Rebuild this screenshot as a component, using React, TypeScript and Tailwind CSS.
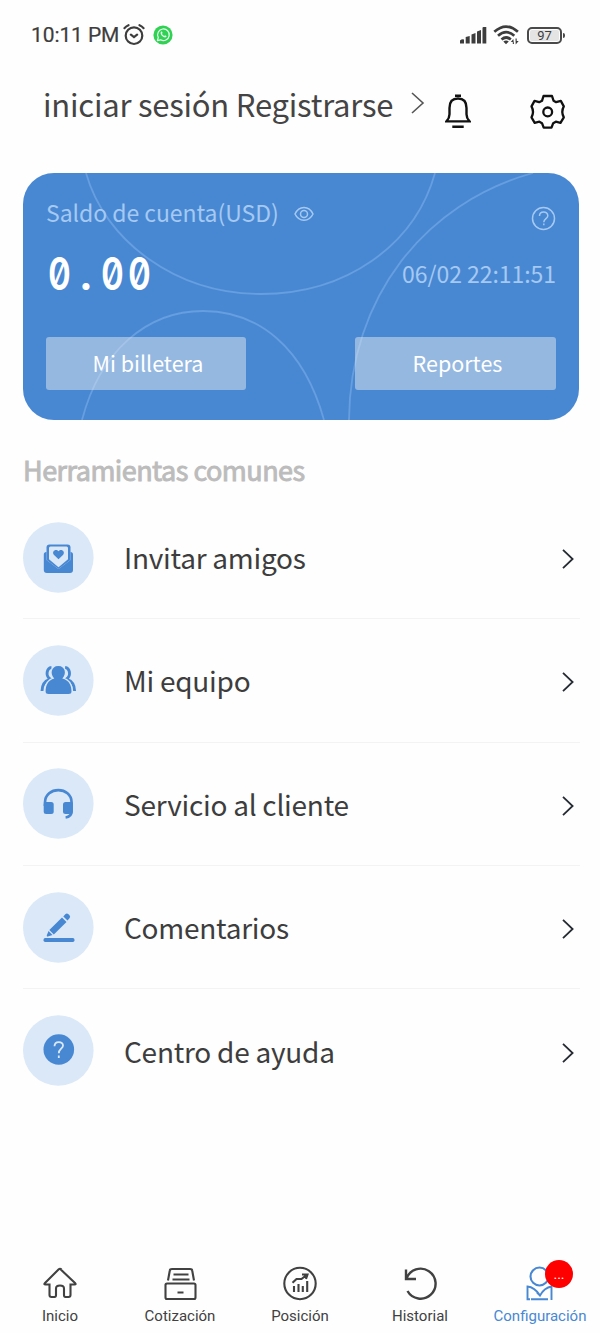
import type { ReactNode } from "react";

const han = "font-['Noto_Sans_CJK_SC',sans-serif]";

function StatusBar() {
  return (
    <div className="flex h-[70px] items-center pl-[31px] pr-[38px] text-[#3d3d3d]">
      <span className="w-[90px] whitespace-nowrap font-[Roboto,sans-serif] text-[21px] leading-6 tracking-[-0.100px] [-webkit-text-stroke:0.200px]">10:11 PM</span>
      <svg className="ml-[2px]" width="23" height="24" viewBox="0 0 23 24" fill="none" stroke="currentColor" strokeWidth="2.200" strokeLinecap="round">
        <circle cx="11" cy="12.700" r="8.300" />
        <path d="M7.900 11.600 11 14l3.100-2.400M1.500 5.200Q3 3.200 5.500 2.200M20.500 5.200Q19 3.200 16.500 2.200" />
      </svg>
      <svg className="ml-[7px]" width="20" height="20" viewBox="0 0 20 20" fill="none">
        <circle cx="10" cy="10" r="9.6" fill="#31d254" />
        <path d="M4.4 15.6 5.3 12.4A5.8 5.8 0 1 1 7.6 14.8Z" stroke="#e9fff0" strokeWidth="1.2" strokeLinejoin="round" />
        <path d="M7.7 7.2c-.7 2.4 2.8 5.8 5 5.1.8-.3.9-1 .7-1.4l-1.4-.7-.7.7c-1.1-.4-1.9-1.2-2.3-2.2l.6-.7-.6-1.4c-.5-.2-1.1 0-1.3.6Z" fill="#e9fff0" />
      </svg>
      <div className="ml-auto flex items-center">
        <svg width="27" height="18" viewBox="0 0 27 18" fill="currentColor">
          <path d="M0 17.500v-3q2-1.800 4-1v4zM5.700 17.500v-6.500l4-1v7.500zM11.500 17.500V8.500l4-1.500v10.500zM17 17.500V5.500l4-1.500v13.500zM22.500 17.500V2q0-.8 1-1h2.800v16.500z" />
        </svg>
        <svg className="ml-[6px]" width="27" height="20" viewBox="0 0 27 20" fill="none" stroke="currentColor" strokeWidth="2.700">
          <path d="M1.300 6.800q11.700-10.500 23.600 0M5 10.800q8.200-7.200 16.300 0M8.500 14.500q4.700-4 9.300 0" />
          <path d="M10.300 16.500q2.800-1.800 5.500 0L13 19.200Z" fill="currentColor" stroke="none" />
          <path d="m20.300 14-2.500 3h2v2h1.200zM22.700 19.500l3-3.500h-2v-2.500h-1.200z" fill="currentColor" stroke="none" />
        </svg>
        <div className="relative ml-[7px] flex h-[17px] w-[35px] items-center justify-center rounded-[5px] border-2 border-[#4a4a4a] p-[1px]">
          <span className="flex h-full w-full items-center justify-center rounded-[2px] bg-[#e4e4e4] font-[Roboto,sans-serif] text-[13px] font-normal leading-none">97</span>
          <span className="absolute -right-[5px] top-1 h-[5px] w-[2px] rounded-r bg-[#4a4a4a]" />
        </div>
      </div>
    </div>
  );
}

function Header() {
  return (
    <div className="flex h-[70px] items-center pl-[43px] text-[#444]">
      <span className="-mt-[3px] w-[351px] whitespace-nowrap text-[31px] leading-[44px] tracking-[-0.220px]">iniciar sesión Registrarse</span>
      <svg className="ml-[17px] -mt-1" width="14" height="22" viewBox="0 0 14 22" fill="none" stroke="#555" strokeWidth="1.6">
        <path d="M1 1 12 11 1 21" />
      </svg>
      <svg className="ml-5 mt-3" width="26" height="35" viewBox="0 0 26 35" fill="none" stroke="#111" strokeWidth="2.400">
        <path d="M10 1.700h6M7.300 32.800h11.400" />
        <path d="M1.500 27.400c2.500-2.800 3-4.400 3-7.200V14c0-6.800 3.300-9.500 8.500-9.500s8.500 2.700 8.500 9.500v6.200c0 2.800.5 4.400 3 7.200Z" />
      </svg>
      <svg className="ml-[59px] mt-[13px]" width="36" height="36" viewBox="0 0 36 36" fill="none" stroke="#111" strokeWidth="2.300" strokeLinejoin="round">
        <path d="M13.500 2h8.500l1.600 4.800 2.500 1.400 4.700-1.300 3 5.500q-3 5.500 0 11l-3.300 5.500-4.700-1.200-2.600 1.500-1.700 4.500h-7.800l-1.700-4.500-2.600-1.500-4.700 1.200-3.200-5.500q3-5.500 0-11l3-5.500 4.700 1.300L12 6.800Z" />
        <circle cx="17.700" cy="17.900" r="4.400" />
      </svg>
    </div>
  );
}

function Card() {
  return (
    <section className="relative ml-[23px] mt-[33px] h-[247px] w-[556px] overflow-hidden rounded-[31px] bg-[#4888d3]">
      <svg className="absolute inset-0" width="556" height="247" fill="none" stroke="#73a8e4" strokeWidth="1.800" strokeOpacity=".7">
        <path d="M63 0C82 68 153 121 238 121S392 72 412 0" />
        <path d="M59 247C77 178 124 138 180 138S281 175 301 247" />
        <path d="M326 247C327 124 402 30 510 0" />
      </svg>
      <div className="relative flex h-full flex-col pl-[23px] pr-[23px]">
        <div className="flex h-20 items-center text-[#a5c9f1]">
          <span className="-mt-[3px] w-[232px] whitespace-nowrap text-[23px] leading-8 tracking-[-0.050px]">Saldo de cuenta(USD)</span>
          <svg className="ml-4 mt-px" width="20" height="16" viewBox="0 0 20 16" fill="none" stroke="currentColor" strokeWidth="1.500">
            <path d="M1 8C5-.7 15-.7 19 8 15 16.300 5 16.300 1 8Z" />
            <circle cx="10" cy="8" r="3.500" />
          </svg>
          <svg className="ml-auto mt-[10px]" width="25" height="25" viewBox="0 0 25 25" fill="none" stroke="currentColor" strokeWidth="1.500">
            <circle cx="12.500" cy="12.500" r="11" />
            <path d="M8.500 10c0-5.200 8.300-5.200 8.300-.3 0 3-4 3-4 6.600M12.800 17.500v1.800" />
          </svg>
        </div>
        <div className="flex h-11 items-center justify-between">
          <span className="-mt-1 flex font-[Inter,sans-serif] text-[45px] font-semibold leading-none text-white [font-feature-settings:'zero'_1]">
            {"0.00".split("").map((c, i) => (
              <span key={i} className={c === "." ? "flex w-[26.700px] justify-center" : "flex w-[26.700px] scale-x-[0.770] justify-center"}>{c}</span>
            ))}
          </span>
          <span className="-mt-1 whitespace-nowrap text-[23px] leading-8 tracking-[-0.050px] text-[#a5c9f1]">06/02 22:11:51</span>
        </div>
        <div className="mt-10 flex justify-between text-[21.500px] text-white">
          <button className="h-[53px] w-[200px] rounded-[3px] bg-[#e2e8f0]/50 pl-1">Mi billetera</button>
          <button className="h-[53px] w-[201px] rounded-[3px] bg-[#e2e8f0]/50 pl-1">Reportes</button>
        </div>
      </div>
    </section>
  );
}

const inviteIcon = (
  <>
    <path d="M20.800 32.500q0-2.500 2.500-2.500h24.200q2.500 0 2.500 2.500V48q0 3-3 3H23.800q-3 0-3-3Z" fill="currentColor" />
    <path d="M23.500 38V25q0-3 3-3h18q3 0 3 3v13l-12 9Z" fill="#dae8f8" />
    <path d="M23.500 38V25.500q0-3 3-3h18q3 0 3 3V38l-12 9Z" fill="currentColor" />
    <path d="M26 26q0-1.500 1.500-1.500h16Q45 24.500 45 26v11.200l-9.500 8-9.500-8Z" fill="#dae8f8" />
    <path d="m35.500 37.300-4.700-4.500c-2.500-3.500 2.300-6.500 4.700-3.500 2.400-3 7.200 0 4.700 3.500Z" fill="currentColor" />
  </>
);
const teamIcon = (
  <>
    <path d="M28.500 22.500c-4.500.5-6.500 8-1.500 11.500-5.500 2-8 6-8 12M42.100 22.500c4.500.5 6.500 8 1.500 11.500 5.500 2 8 6 8 12" fill="none" stroke="currentColor" strokeWidth="2.900" />
    <path d="M35.300 21c7.500 0 8.300 8.500 4 12.500 7 1.500 9.200 7.500 9.200 13q0 2.500-3 2.500H25.600q-3 0-3-2.500c0-5.500 2.200-11.500 8.700-13C27 29.500 27.800 21 35.300 21Z" fill="currentColor" stroke="#dae8f8" strokeWidth="2.400" paintOrder="stroke" />
  </>
);
const serviceIcon = (
  <>
    <path d="M22 38v-3.500c0-16.500 26.600-16.500 26.600 0V43c0 4-2 6-6 6.500" fill="none" stroke="currentColor" strokeWidth="2.700" />
    <rect x="20.700" y="34" width="10" height="12" rx="2.500" fill="currentColor" />
    <rect x="40" y="34" width="9.800" height="12" rx="2.500" fill="currentColor" />
  </>
);
const commentIcon = (
  <g fill="currentColor">
    <path d="m39 25.500 4.500 4.500-12.700 12.500-4.500-4.500ZM25.500 39l4 4-4.700 1.600c-1.400-.1-1.100-1-.9-1.700ZM40.300 24.500l2-2.300q1.500-1.500 3.200 0l1 1q1.300 1.500 0 3l-2 2.200Z" />
    <rect x="20.500" y="46" width="31" height="4" rx="1.700" />
  </g>
);
const helpIcon = (
  <>
    <circle cx="35.800" cy="34.500" r="15.300" fill="currentColor" />
    <path d="M31.500 31.300c0-5.800 8.800-5.300 8.500-.6-.2 3-4.200 3.300-4.200 7.500M35.800 40.500v2.500" fill="none" stroke="#dae8f8" strokeWidth="1.800" />
  </>
);

const rows: { label: string; icon: ReactNode }[] = [
  { label: "Invitar amigos", icon: inviteIcon },
  { label: "Mi equipo", icon: teamIcon },
  { label: "Servicio al cliente", icon: serviceIcon },
  { label: "Comentarios", icon: commentIcon },
  { label: "Centro de ayuda", icon: helpIcon },
];

function Tools() {
  return (
    <section className="pl-[23px] pr-[20px]">
      <h2 className="mt-[30px] whitespace-nowrap text-[27px] font-normal leading-10 tracking-[-0.530px] text-[#bcbcbc] [-webkit-text-stroke:0.9px_#bcbcbc]">Herramientas comunes</h2>
      <ul className="mt-[6px]">
        {rows.map(({ label, icon }) => (
          <li key={label} className="flex h-[123.300px] items-center border-b border-[#f3f3f3] last:border-0">
            <svg className="text-[#4888d3]" width="71" height="71" viewBox="0 0 71 71">
              <circle cx="35.300" cy="35.500" r="35.300" fill="#dae8f8" />
              {icon}
            </svg>
            <span className="ml-[30px] whitespace-nowrap text-[28px] leading-10 tracking-[-0.250px] text-[#3d3d3d]">{label}</span>
            <svg className="ml-auto mr-[5px] mt-[4px]" width="14" height="22" viewBox="0 0 14 22" fill="none" stroke="#252b33" strokeWidth="1.800">
              <path d="m2 1.800 9.600 9.200L2 20.200" />
            </svg>
          </li>
        ))}
      </ul>
    </section>
  );
}

const tabs: { label: string; icon: ReactNode }[] = [
  { label: "Inicio", icon: <path d="M20 4.800 35 19q1.500 1.500-.5 1.500h-4V31q0 2-2 2h-3q-1.500 0-1.500-2v-6.500q0-3-4-3t-4 3V31q0 2-1.500 2h-3q-2 0-2-2V20.500h-4q-2 0-.5-1.500L18.500 5.500Q20 4 21.500 5.500" /> },
  {
    label: "Cotización",
    icon: <><rect x="5.500" y="19.500" width="30" height="15.500" rx="1.500" /><path d="M8 16.500 9.800 6.500Q10 5 12 5h18q2 0 2.200 1.500L34 16.500M13.500 10.500h15M12.500 15.500h17M17.500 28.500h6" /></>,
  },
  {
    label: "Posición",
    icon: <><circle cx="20" cy="19.500" r="15.700" /><path d="M14 22v6M18.500 20V28M22.800 22v6M27.200 17V28M12.500 18.800l4-3.800h5l5-4M22 10.500h5.500l-1.500 4.500" /></>,
  },
  { label: "Historial", icon: <path strokeWidth="2.400" d="M6 5.500v9.500h10M6.500 14.500a15 15 0 1 1 1 12.500" /> },
  {
    label: "Configuración",
    icon: <><circle cx="19.500" cy="12.500" r="9" /><path strokeWidth="1.900" d="M10 35.200H7.500V22.500q7 .5 12.500 9 4.500-8 11.500-9V36M11 35.200h17M20 31.500l-3-3" /></>,
  },
];

function TabBar() {
  return (
    <nav className="mt-auto flex h-[69px] font-[Roboto,sans-serif]">
      {tabs.map(({ label, icon }, i) => (
        <div key={label} className={i === 4 ? "relative flex w-[120px] flex-col items-center text-[#4888d3]" : "relative flex w-[120px] flex-col items-center text-[#414141]"}>
          <svg width="40" height="40" viewBox="0 0 40 40" fill="none" stroke="currentColor" strokeWidth="2.100">{icon}</svg>
          <span className="whitespace-nowrap text-[15px] leading-6">{label}</span>
          {i === 4 && (
            <span className="absolute left-[65px] -top-[4px] flex h-7 w-7 items-center justify-center rounded-full bg-[#fe0000] text-[14px] leading-none text-white">...</span>
          )}
        </div>
      ))}
    </nav>
  );
}

export default function App() {
  return (
    <main className={`flex h-[1333px] w-[600px] flex-col overflow-hidden bg-[#fefefe] ${han}`}>
      <StatusBar />
      <Header />
      <Card />
      <Tools />
      <TabBar />
    </main>
  );
}
